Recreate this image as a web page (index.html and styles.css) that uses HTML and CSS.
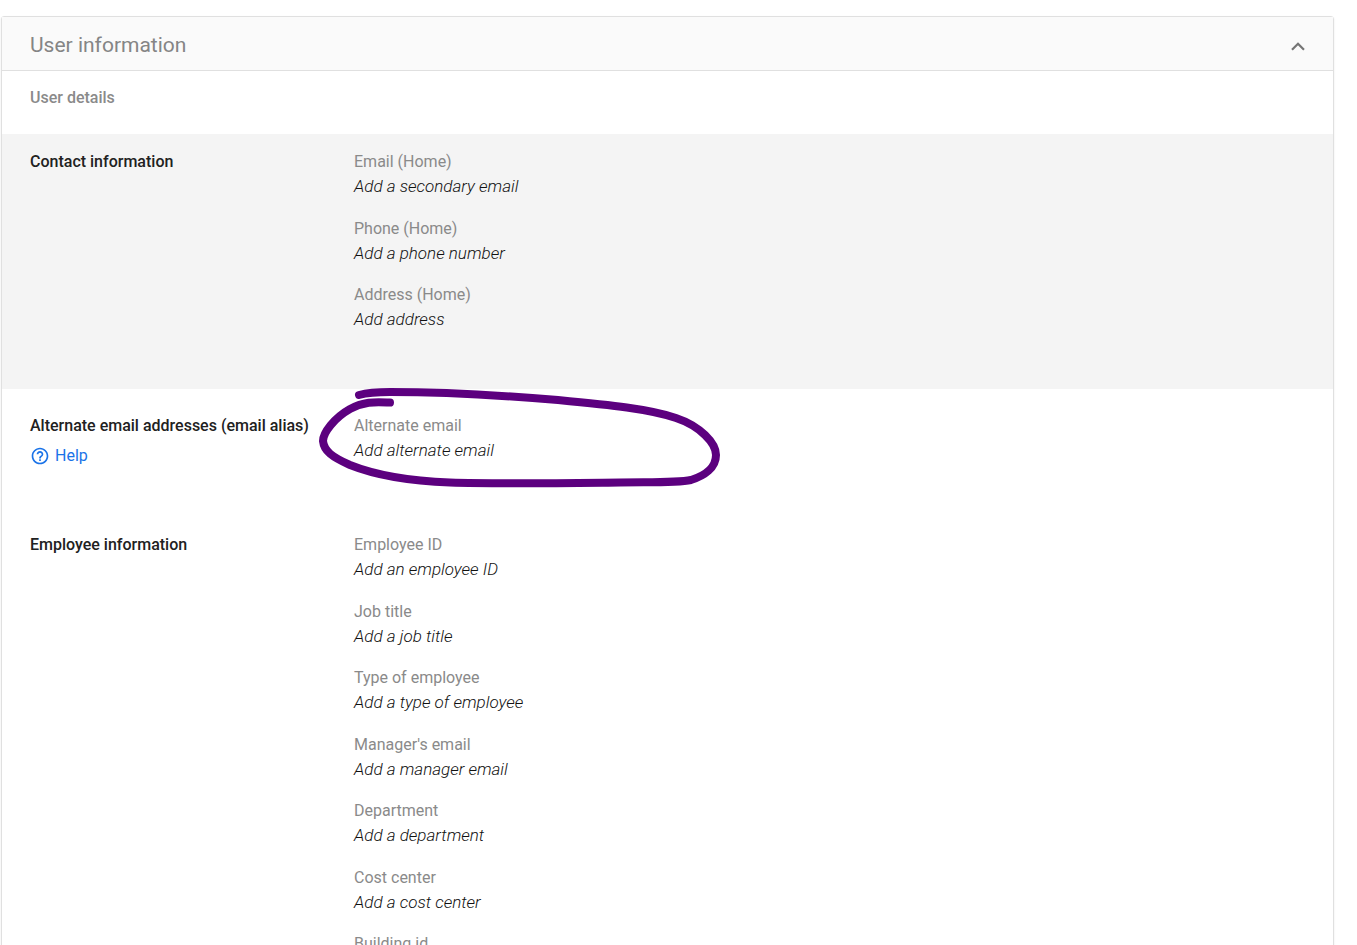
FILE: index.html
```html
<!DOCTYPE html>
<html lang="en">
<head>
  <meta charset="UTF-8" />
  <title>User information</title>
  <meta name="viewport" content="width=device-width, initial-scale=1.0"/>
  <link rel="stylesheet" href="styles.css">
</head>
<body>

<main class="card">
  <header class="card-header">
    <h1>User information</h1>
    <button class="collapse" aria-label="Collapse">
      <svg width="14" height="9" viewBox="0 0 14 9"><path d="M1 7.8 7 1.8 13 7.8" fill="none" stroke="#757575" stroke-width="2.2"/></svg>
    </button>
  </header>

  <h2 class="subtitle">User details</h2>

  <section class="section shaded">
    <div class="section-name">
      <h3>Contact information</h3>
    </div>
    <dl class="fields">
      <div class="field"><dt>Email (Home)</dt><dd><button>Add a secondary email</button></dd></div>
      <div class="field"><dt>Phone (Home)</dt><dd><button>Add a phone number</button></dd></div>
      <div class="field"><dt>Address (Home)</dt><dd><button>Add address</button></dd></div>
    </dl>
  </section>

  <section class="section">
    <div class="section-name">
      <h3>Alternate email addresses (email alias)</h3>
      <a class="help" href="#">
        <svg width="20" height="20" viewBox="0 0 24 24" fill="currentColor"><path d="M11 18h2v-2h-2v2zm1-16C6.480 2 2 6.480 2 12s4.480 10 10 10 10-4.480 10-10S17.520 2 12 2zm0 18c-4.410 0-8-3.590-8-8s3.590-8 8-8 8 3.590 8 8-3.590 8-8 8zm0-14c-2.210 0-4 1.790-4 4h2c0-1.100.9-2 2-2s2 .9 2 2c0 2-3 1.750-3 5h2c0-2.250 3-2.500 3-5 0-2.210-1.790-4-4-4z"/></svg>
        Help
      </a>
    </div>
    <dl class="fields marked">
      <div class="field"><dt>Alternate email</dt><dd><button>Add alternate email</button></dd></div>
      <!-- pen circle around the alias field -->
      <svg class="pen" width="440" height="130" viewBox="0 0 440 130" aria-hidden="true">
        <path d="M59 25C70 22 78 22 90 22C150 22 210 26 258 30C310 35 350 39 376 48C400 56 416 73 416 85C416 98 404 106 391 110C377 113 350 112 320 112.500C270 113 200 114 150 112.500C110 111 75 105 50 95C32 87 24 81 23 71C23 63 34 48 50 39C65 31 75 32 90 32.500"/>
      </svg>
    </dl>
  </section>

  <section class="section">
    <div class="section-name">
      <h3>Employee information</h3>
    </div>
    <dl class="fields">
      <div class="field"><dt>Employee ID</dt><dd><button>Add an employee ID</button></dd></div>
      <div class="field"><dt>Job title</dt><dd><button>Add a job title</button></dd></div>
      <div class="field"><dt>Type of employee</dt><dd><button>Add a type of employee</button></dd></div>
      <div class="field"><dt>Manager's email</dt><dd><button>Add a manager email</button></dd></div>
      <div class="field"><dt>Department</dt><dd><button>Add a department</button></dd></div>
      <div class="field"><dt>Cost center</dt><dd><button>Add a cost center</button></dd></div>
      <div class="field"><dt>Building id</dt></div>
    </dl>
  </section>
</main>

</body>
</html>
```
FILE: styles.css
```css
* { box-sizing: border-box; }
body { margin: 0; padding: 16px 23px 0 1px; background: #fff; font: 16px/25px Roboto, sans-serif; color: #212121; }
h1, h2, h3, dl, dd { margin: 0; }
button { padding: 0; border: 0; background: none; font: inherit; color: inherit; cursor: pointer; }

.card { border: 1px solid #e0e0e0; border-radius: 3px; box-shadow: 0 1px 2px rgba(0, 0, 0, 0.1); }
.card-header { display: flex; align-items: center; justify-content: space-between; height: 54px; padding: 4px 28px 0; background: #fafafa; border-bottom: 1px solid #e0e0e0; }
.card-header h1 { font-size: 21px; font-weight: 400; color: #858585; }
.collapse { display: flex; padding: 2px 0 0; }
.subtitle { padding: 14px 28px 24px; font-size: 16px; font-weight: 500; color: #8a8a8a; }

.section { display: grid; grid-template-columns: 324px 1fr; padding: 24px 28px 28px; }
.section.shaded { padding-top: 15px; padding-bottom: 40px; background: #f4f4f4; }
.section h3 { font-size: 16px; font-weight: 500; white-space: nowrap; }
.help { display: flex; align-items: center; gap: 5px; margin-top: 5px; color: #1a73e8; text-decoration: none; }

.field { margin-bottom: 16px; }
.field:nth-child(odd) { margin-bottom: 17px; }
.field dt { color: #8a8a8a; }
.field dd { font-size: 17px; font-weight: 300; font-style: italic; color: #111; }
.field button { display: block; }

.marked { position: relative; }
.pen { position: absolute; left: -54px; top: -43px; pointer-events: none; }
.pen path { fill: none; stroke: #5c007f; stroke-width: 8; stroke-linecap: round; stroke-linejoin: round; }
```
